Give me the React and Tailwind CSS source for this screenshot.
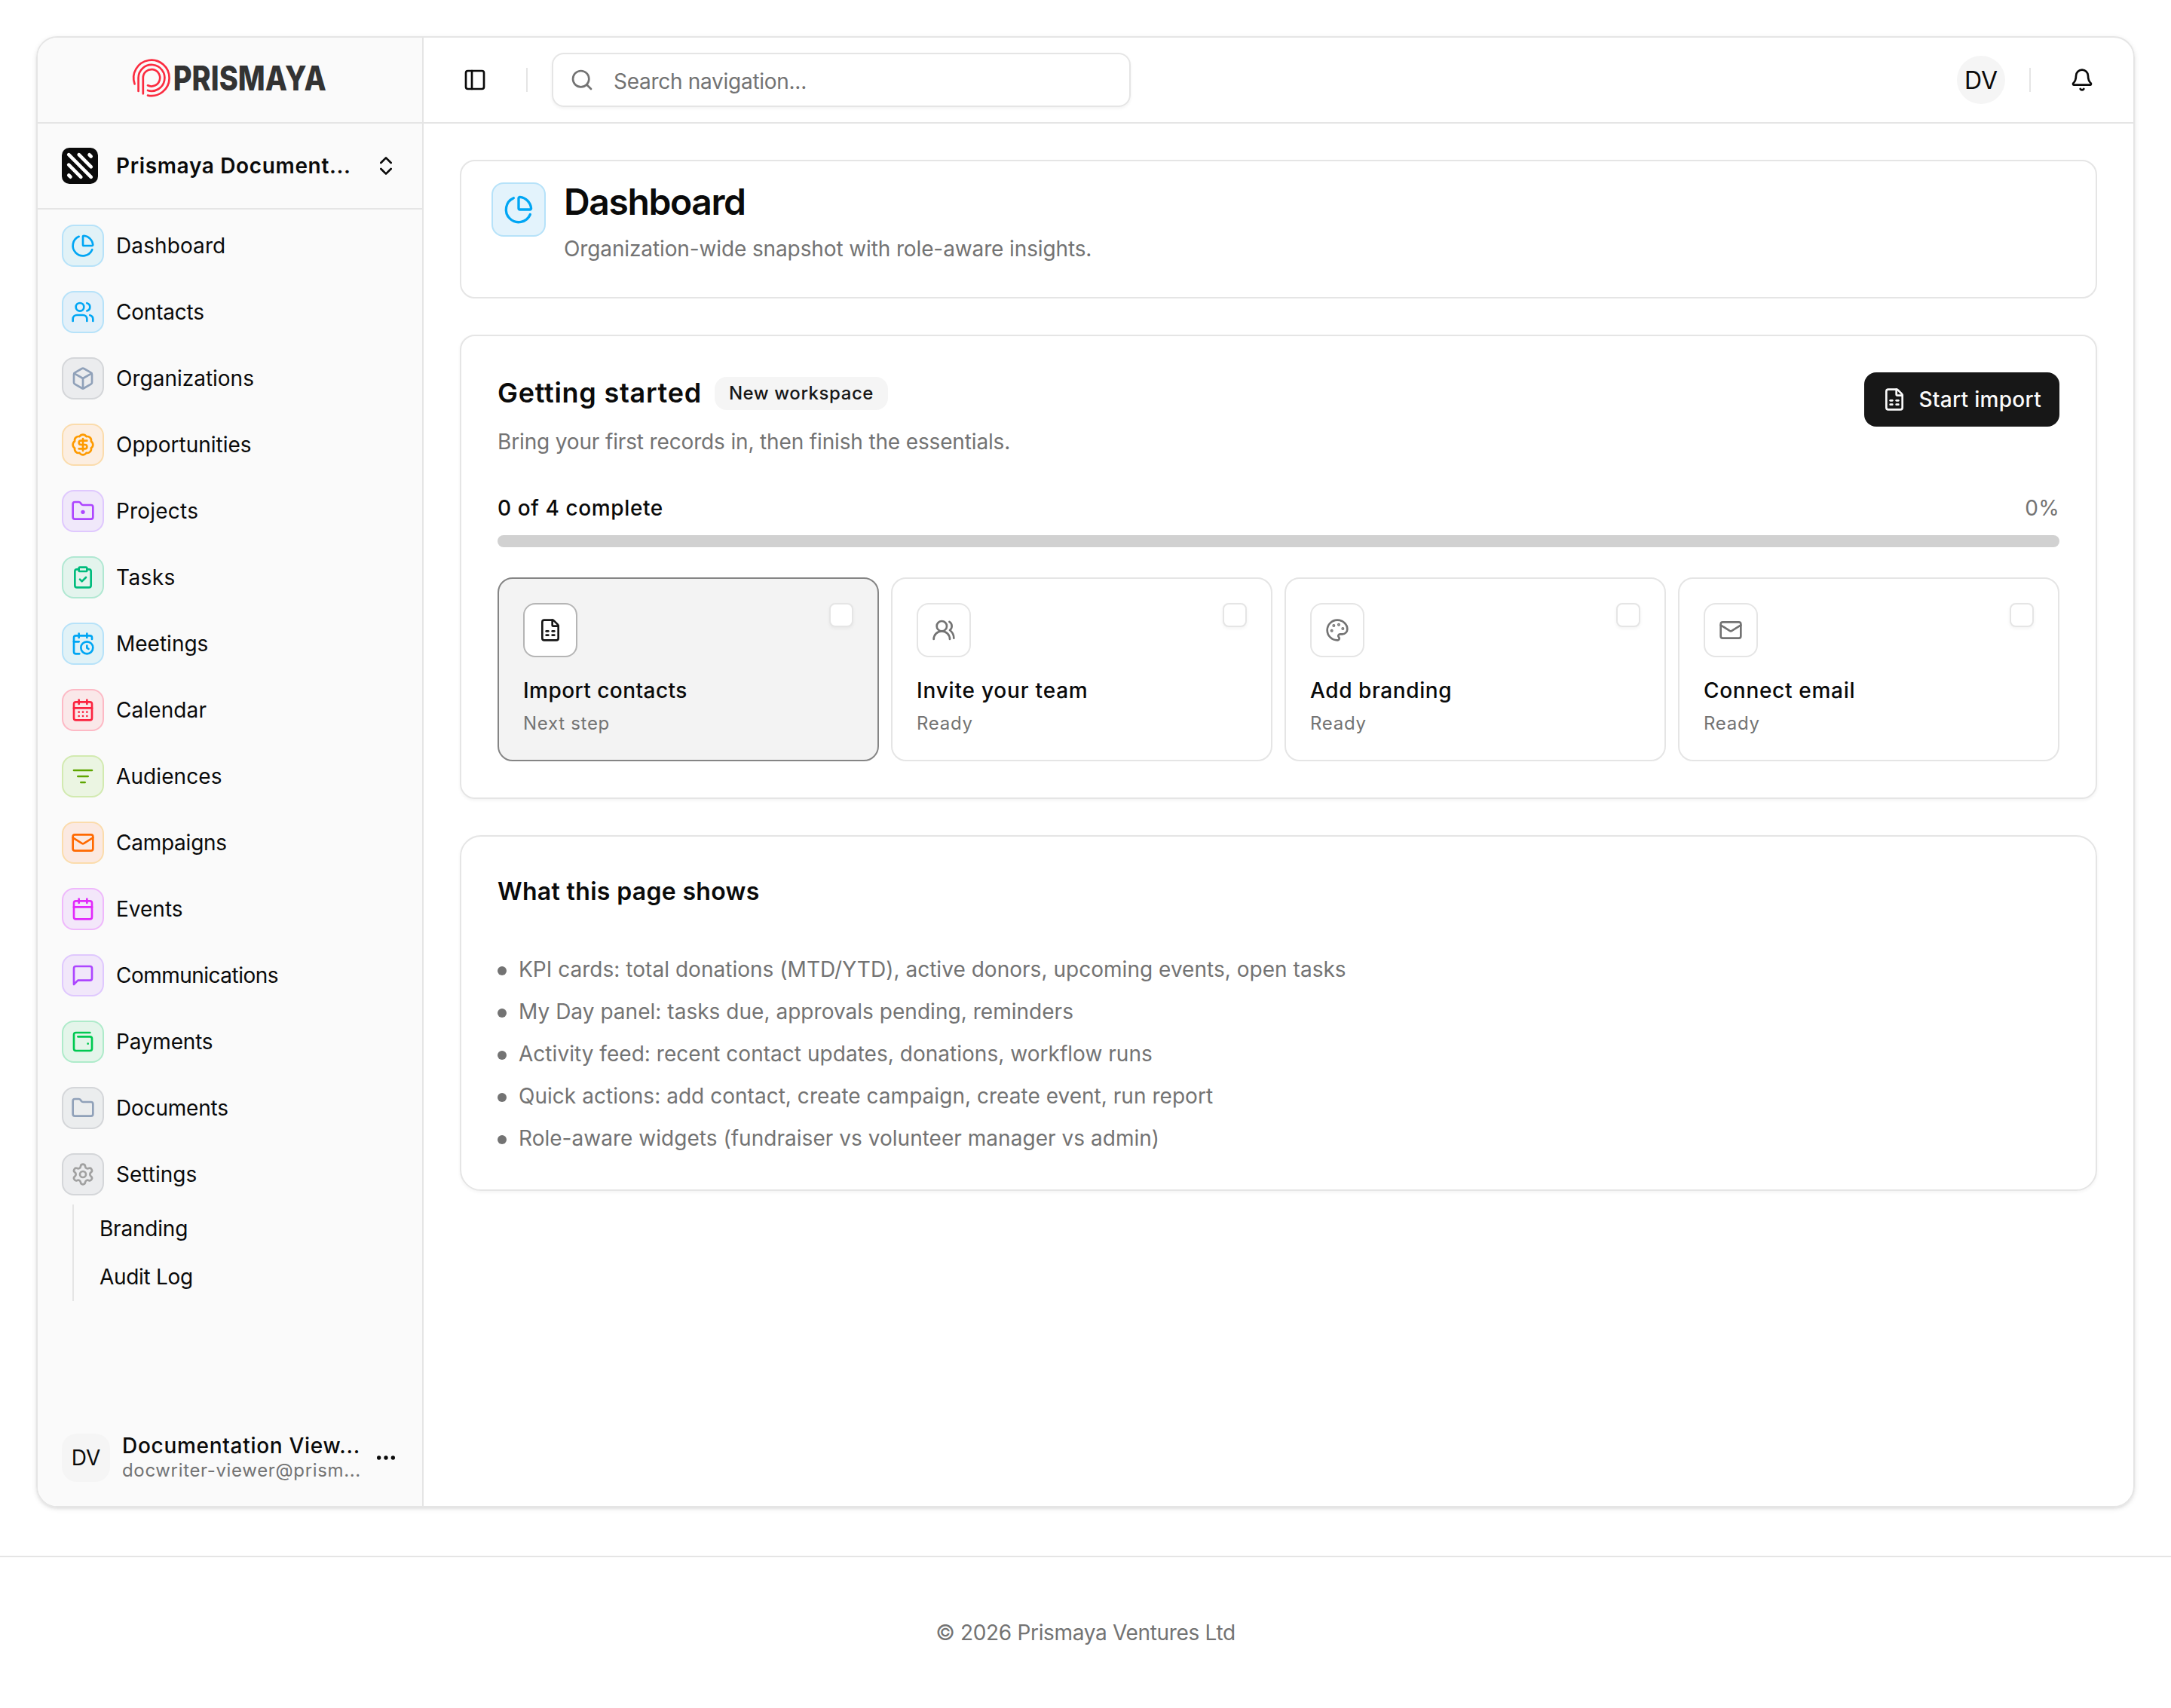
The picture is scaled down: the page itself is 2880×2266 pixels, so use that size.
import {
  BadgeDollarSign, Bell, Box, Calendar, CalendarClock, CalendarDays, ChartPie, ChevronsUpDown,
  ClipboardCheck, Ellipsis, FileSpreadsheet, Folder, FolderDot, Mail, Palette, PanelLeft,
  Search, Settings, Users, UsersRound, WalletMinimal,
} from 'lucide-react';

const stroke = {
  viewBox: '0 0 24 24', fill: 'none', stroke: 'currentColor',
  strokeWidth: 2, strokeLinecap: 'round', strokeLinejoin: 'round',
};

const FilterLines = ({ className }) => (
  <svg {...stroke} className={className}><path d="M3 6h18M7 12h10M10 18h4"/></svg>
);

const MessageSquare = ({ className }) => (
  <svg {...stroke} className={className}>
    <path d="M21 15a2 2 0 0 1-2 2H7l-4 4V5a2 2 0 0 1 2-2h14a2 2 0 0 1 2 2z"/>
  </svg>
);

const NAV = [
  { label: 'Dashboard', icon: ChartPie, tile: 'bg-[#e1f2f7] border-[#b6e2f9] text-sky-500', text: 'tracking-[0.1px]' },
  { label: 'Contacts', icon: Users, tile: 'bg-[#e3f0f9] border-[#b6e2f9] text-sky-500', text: 'tracking-[-0.2px]' },
  { label: 'Organizations', icon: Box, tile: 'bg-[#ebecee] border-[#d4d6d9] text-slate-400' },
  { label: 'Opportunities', icon: BadgeDollarSign, tile: 'bg-[#fceee1] border-[#fbdcac] text-amber-500' },
  { label: 'Projects', icon: FolderDot, tile: 'bg-[#f0e8fa] border-[#dfc8fe] text-purple-500', text: 'tracking-[0.2px]' },
  { label: 'Tasks', icon: ClipboardCheck, tile: 'bg-[#e3f4ed] border-[#b0e8d2] text-emerald-500', text: 'tracking-[0.4px]' },
  { label: 'Meetings', icon: CalendarClock, tile: 'bg-[#e1f2f7] border-[#b6e2f9] text-sky-500' },
  { label: 'Calendar', icon: CalendarDays, tile: 'bg-[#fae8e9] border-[#fdb9c5] text-[#fb2440]', text: 'tracking-[0.1px]' },
  { label: 'Audiences', icon: FilterLines, tile: 'bg-[#ebf5e2] border-[#d2eab0] text-lime-600', text: 'tracking-[0.1px]' },
  { label: 'Campaigns', icon: Mail, tile: 'bg-[#fbe9e1] border-[#fbdcac] text-orange-500', text: 'tracking-[-0.25px]' },
  { label: 'Events', icon: Calendar, tile: 'bg-[#f3e7fa] border-[#efb8fc] text-fuchsia-500' },
  { label: 'Communications', icon: MessageSquare, tile: 'bg-[#f1e7fa] border-[#dfc8fe] text-purple-500', text: 'tracking-[-0.52px]' },
  { label: 'Payments', icon: WalletMinimal, tile: 'bg-[#e4f5ea] border-[#aeebca] text-green-500', text: 'tracking-[-0.2px]' },
  { label: 'Documents', icon: Folder, tile: 'bg-[#ebedee] border-[#d4d6d9] text-slate-400', text: 'tracking-[-0.2px]' },
  { label: 'Settings', icon: Settings, tile: 'bg-[#ebecee] border-[#d4d6d9] text-neutral-400' },
];

const STEPS = [
  { title: 'Import contacts', status: 'Next step', icon: FileSpreadsheet, text: 'tracking-[0.45px]', active: true },
  { title: 'Invite your team', status: 'Ready', icon: UsersRound, text: 'tracking-[0.8px]' },
  { title: 'Add branding', status: 'Ready', icon: Palette, text: 'tracking-[0.6px]' },
  { title: 'Connect email', status: 'Ready', icon: Mail, text: 'tracking-[0.7px]' },
];

const NOTES = [
  'KPI cards: total donations (MTD/YTD), active donors, upcoming events, open tasks',
  'My Day panel: tasks due, approvals pending, reminders',
  'Activity feed: recent contact updates, donations, workflow runs',
  'Quick actions: add contact, create campaign, create event, run report',
  'Role-aware widgets (fundraiser vs volunteer manager vs admin)',
];

function Logo() {
  return (
    <svg viewBox="0 0 260 52" className="w-[260px] h-[52px] overflow-visible">
      <g fill="none" stroke="#fb2c40" strokeWidth="2.7" strokeLinecap="round">
        <path d="M3.6 33.4A23.7 23.7 0 1 1 21 48.6"/>
        <path d="M8.6 43V25.3A17.4 17.4 0 1 1 21 42"/>
        <path d="M14.8 46.3V25.3A11.2 11.2 0 1 1 21 35.3"/>
      </g>
      <text x="54.8" y="42.4" textLength="203" lengthAdjust="spacingAndGlyphs"
        className="font-['Inter'] font-extrabold text-[45px] fill-[#333333]">PRISMAYA</text>
    </svg>
  );
}

function OrgMark() {
  return (
    <svg viewBox="0 0 48 48" className="size-12 shrink-0">
      <rect width="48" height="48" rx="10" fill="#0a0a0a"/>
      <path d="M36.5 9.3l2.2 2.2M22.7 9.2l16.1 16.1M9.2 9.2l29.6 29.6M9.2 22.7l16.1 16.1M9.3 36.5l2.2 2.2"
        stroke="#fff" strokeWidth="4.6" strokeLinecap="round"/>
    </svg>
  );
}

function Sidebar() {
  return (
    <aside className="w-[512px] shrink-0 flex flex-col bg-[#fafafa] border-r-2 border-neutral-200">
      <div className="h-[114px] shrink-0 border-b-2 border-neutral-200 flex items-center justify-center pb-1">
        <Logo/>
      </div>
      <div className="h-[114px] shrink-0 border-b-2 border-neutral-200 flex items-center px-8">
        <OrgMark/>
        <span className="ml-6 mr-auto whitespace-nowrap font-semibold tracking-[0.65px]">Prismaya Document...</span>
        <ChevronsUpDown className="size-8"/>
      </div>

      <nav className="flex flex-col gap-2 px-4 pt-2">
        {NAV.map(({ label, icon: Icon, tile, text = '' }) => (
          <a key={label} className={`h-20 px-4 flex items-center gap-4 ${text}`}>
            <span className={`size-14 rounded-2xl border-2 flex items-center justify-center ${tile}`}>
              <Icon className="size-8"/>
            </span>
            {label}
          </a>
        ))}
      </nav>
      <div className="ml-[46px] border-l-2 border-neutral-200 pl-[34px] py-1 flex flex-col gap-2">
        <a className="h-14 flex items-center tracking-[-0.2px]">Branding</a>
        <a className="h-14 flex items-center tracking-[-0.3px]">Audit Log</a>
      </div>

      {/* User */}
      <div className="mt-auto mb-8 px-8 h-16 flex items-center">
        <span className="size-16 shrink-0 rounded-[20px] bg-neutral-100 flex items-center justify-center">DV</span>
        <span className="ml-4 mr-auto flex flex-col whitespace-nowrap">
          <span className="font-medium leading-[34px] tracking-[0.7px]">Documentation View...</span>
          <span className="text-2xl leading-8 tracking-[0.65px] text-neutral-500">docwriter-viewer@prism...</span>
        </span>
        <Ellipsis className="size-8"/>
      </div>
    </aside>
  );
}

function Header() {
  return (
    <header className="h-[114px] shrink-0 border-b-2 border-neutral-200 flex items-center px-8">
      <button className="size-[72px] flex items-center justify-center"><PanelLeft className="size-8"/></button>
      <div className="mx-8 w-0.5 h-8 bg-neutral-200"/>
      <div className="w-[768px] h-[72px] rounded-2xl border-2 border-neutral-200 shadow-[0_2px_4px_rgba(0,0,0,0.05)] flex items-center gap-[26px] pl-[22px] text-neutral-500">
        <Search className="size-8"/>
        <span className="pt-[3px] tracking-[-0.28px]">Search navigation...</span>
      </div>
      <div className="ml-auto size-16 pt-px rounded-full bg-neutral-100 flex items-center justify-center text-[32px]">DV</div>
      <div className="mx-8 w-0.5 h-8 bg-neutral-200"/>
      <button className="size-[72px] flex items-center justify-center"><Bell className="size-8"/></button>
    </header>
  );
}

function StepCard({ title, status, icon: Icon, text, active }) {
  return (
    <div className={`rounded-[20px] border-2 p-8 ${active ? 'bg-[#f3f3f3] border-[#858585]' : 'bg-white border-neutral-200'}`}>
      <div className="flex items-start justify-between">
        <div className={`size-[72px] rounded-2xl border-2 bg-white flex items-center justify-center ${active ? 'border-[#b5b5b5] text-neutral-900' : 'border-neutral-200 text-neutral-500'}`}>
          <Icon className="size-8"/>
        </div>
        <div className="size-8 rounded-lg border-2 border-neutral-200 bg-white shadow-[0_2px_4px_rgba(0,0,0,0.05)]"/>
      </div>
      <p className={`mt-6 font-medium ${text}`}>{title}</p>
      <p className="mt-2 text-2xl leading-8 tracking-[0.7px] text-neutral-500">{status}</p>
    </div>
  );
}

export default function App() {
  return (
    <div className="w-[2880px] h-[2266px] bg-white flex flex-col font-['Inter',sans-serif] text-[28px] leading-10 text-neutral-950">
      <div className="mx-12 mt-12 h-[1952px] rounded-[28px] border-2 border-neutral-200 shadow-[0_2px_6px_rgba(0,0,0,0.1),0_2px_4px_-2px_rgba(0,0,0,0.1)] overflow-hidden flex">
        <Sidebar/>
        <div className="flex-1 flex flex-col">
          <Header/>
          <main className="p-12 flex flex-col gap-12">
            {/* Page title */}
            <section className="h-[184px] rounded-[20px] border-2 border-neutral-200 px-10 pt-[22px] flex items-start gap-6">
              <div className="mt-1.5 size-[72px] rounded-2xl border-2 border-[#b6e2f9] bg-[#e3f3fc] text-sky-500 flex items-center justify-center">
                <ChartPie className="size-10"/>
              </div>
              <div>
                <h1 className="text-5xl leading-[64px] font-semibold tracking-[-1.4px]">Dashboard</h1>
                <p className="mt-2.5 tracking-[-0.12px] text-neutral-500">Organization-wide snapshot with role-aware insights.</p>
              </div>
            </section>

            {/* Getting started */}
            <section className="rounded-[20px] border-2 border-neutral-200 p-12 shadow-[0_2px_4px_rgba(0,0,0,0.05)]">
              <div className="flex items-start justify-between">
                <div>
                  <div className="h-14 flex items-center gap-[17px]">
                    <h2 className="pb-0.5 text-4xl font-semibold tracking-[0.73px]">Getting started</h2>
                    <span className="h-11 w-[230px] rounded-2xl bg-neutral-100 flex items-center justify-center text-2xl font-medium tracking-[0.56px] text-neutral-900">New workspace</span>
                  </div>
                  <p className="mt-4 tracking-[-0.15px] text-neutral-500">Bring your first records in, then finish the essentials.</p>
                </div>
                <button className="h-[72px] px-6 rounded-2xl bg-neutral-900 text-neutral-50 font-medium tracking-[0.3px] flex items-center gap-4">
                  <FileSpreadsheet className="size-8"/>
                  Start import
                </button>
              </div>
              <div className="mt-12 flex justify-between">
                <span className="font-medium tracking-[0.6px]">0 of 4 complete</span>
                <span className="tracking-[0.3px] text-neutral-500">0%</span>
              </div>
              <div className="mt-4 h-4 rounded-full bg-[#d1d1d1]"/>
              <div className="mt-10 grid grid-cols-4 gap-4">
                {STEPS.map(step => <StepCard key={step.title} {...step}/>)}
              </div>
            </section>

            {/* Notes */}
            <section className="rounded-[28px] border-2 border-neutral-200 p-12 shadow-[0_2px_4px_rgba(0,0,0,0.05)]">
              <h2 className="text-[32px] leading-[50px] font-semibold tracking-[0.32px]">What this page shows</h2>
              <ul className="mt-[58px] flex flex-col gap-4 tracking-[0.03px] text-neutral-500">
                {NOTES.map(note => (
                  <li key={note} className="flex items-start gap-4">
                    <span className="mt-4 size-3 rounded-full bg-neutral-500"/>
                    {note}
                  </li>
                ))}
              </ul>
            </section>
          </main>
        </div>
      </div>
      <footer className="mt-16 flex-1 border-t-2 border-neutral-200 flex items-center justify-center tracking-[-0.33px] text-neutral-500">
        © 2026 Prismaya Ventures Ltd
      </footer>
    </div>
  );
}
